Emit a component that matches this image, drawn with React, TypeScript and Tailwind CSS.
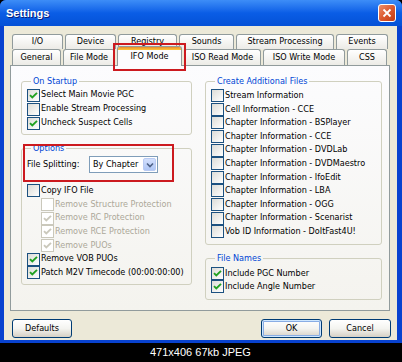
import React from 'react';

const ROW1 = [
  { label: 'I/O', w: 'w-[51px]' },
  { label: 'Device', w: 'w-[51px]' },
  { label: 'Registry', w: 'w-[59px]' },
  { label: 'Sounds', w: 'w-[55px]' },
  { label: 'Stream Processing', w: 'w-[98px]' },
  { label: 'Events', w: 'w-[52px]' },
];

const ROW2 = [
  { label: 'General', w: 'w-[49px]' },
  { label: 'File Mode', w: 'w-[52px]' },
  { label: 'IFO Mode', w: 'w-[65px]', active: true },
  { label: 'ISO Read Mode', w: 'w-[77px]' },
  { label: 'ISO Write Mode', w: 'w-[82px]' },
  { label: 'CSS', w: 'w-[40px]' },
];

const STARTUP = [
  { label: 'Select Main Movie PGC', checked: true },
  { label: 'Enable Stream Processing', checked: false },
  { label: 'Uncheck Suspect Cells', checked: true },
];

const OPTIONS = [
  { label: 'Copy IFO File', checked: false },
  { label: 'Remove Structure Protection', checked: false, sub: true },
  { label: 'Remove RC Protection', checked: true, sub: true },
  { label: 'Remove RCE Protection', checked: true, sub: true },
  { label: 'Remove PUOs', checked: true, sub: true },
  { label: 'Remove VOB PUOs', checked: true },
  { label: 'Patch M2V Timecode (00:00:00:00)', checked: true },
];

const EXTRA = [
  'Stream Information',
  'Cell Information - CCE',
  'Chapter Information - BSPlayer',
  'Chapter Information - CCE',
  'Chapter Information - DVDLab',
  'Chapter Information - DVDMaestro',
  'Chapter Information - IfoEdit',
  'Chapter Information - LBA',
  'Chapter Information - OGG',
  'Chapter Information - Scenarist',
  'Vob ID Information - DoItFast4U!',
];

function Check({ checked, disabled }: { checked: boolean; disabled?: boolean }) {
  return (
    <span
      className={`w-[13px] h-[13px] shrink-0 flex items-center justify-center border ${
        disabled
          ? 'border-[#CAC8BB] bg-white'
          : 'border-[#1C5180] bg-gradient-to-br from-[#DCDCD7] to-white'
      }`}
    >
      {checked && (
        <svg width="11" height="11" viewBox="0 0 11 11">
          <path
            d="M2 5.2 L4.3 7.5 L9 2.8"
            fill="none"
            stroke={disabled ? '#CAC8BB' : '#21A121'}
            strokeWidth="1.9"
          />
        </svg>
      )}
    </span>
  );
}

function Row({
  label,
  checked,
  disabled,
  h,
}: {
  label: string;
  checked: boolean;
  disabled?: boolean;
  h: string;
}) {
  return (
    <div className={`flex items-center gap-[1px] ${h}`}>
      <Check checked={checked} disabled={disabled} />
      <span className={`whitespace-nowrap ${disabled ? 'text-[#ACA899]' : 'text-black'}`}>{label}</span>
    </div>
  );
}

function Group({ title, className, children }: { title: string; className?: string; children: React.ReactNode }) {
  return (
    <fieldset className={`border border-[#D0D0BF] rounded-[3px] pl-[5px] pr-[2px] ${className ?? ''}`}>
      <legend className="ml-[4px] px-[2px] leading-[13px] text-[#0046D5]">{title}</legend>
      {children}
    </fieldset>
  );
}

function Tab({ label, w, active, h }: { label: string; w: string; active?: boolean; h: string }) {
  if (active) {
    return (
      <div
        className={`${w} h-[20px] -mb-[1px] relative z-10 flex flex-col rounded-t-[3px] border border-b-0 border-[#919B9C] bg-[#FCFCFE] overflow-hidden`}
      >
        <div className="h-[3px] bg-gradient-to-b from-[#E68B2C] to-[#FFC73C]" />
        <div className="flex-1 flex items-center justify-center pb-[2px]">{label}</div>
      </div>
    );
  }
  return (
    <div
      className={`${w} ${h} flex items-center justify-center rounded-t-[3px] border border-b-0 border-[#919B9C] bg-gradient-to-b from-white to-[#ECEBE6]`}
    >
      {label}
    </div>
  );
}

function Button({ label, w, def }: { label: string; w: string; def?: boolean }) {
  return (
    <div
      className={`${w} h-[19px] flex items-center justify-center rounded-[3px] border border-[#003C74] bg-gradient-to-b from-white via-[#F4F4F0] to-[#D6D0C5] ${
        def ? 'shadow-[inset_0_0_0_1px_#CEE7FF,inset_0_0_0_2px_#89ADE4]' : ''
      }`}
    >
      {label}
    </div>
  );
}

export default function App() {
  return (
    <div className="relative w-[402px] h-[362px] bg-black overflow-hidden font-['DejaVu_Sans_Condensed','DejaVu_Sans',sans-serif] text-[9px] text-black">
      <div className="h-[343px] flex flex-col bg-[#0842CF] rounded-t-[6px]">
        {/* title bar */}
        <div className="h-[26px] flex items-center justify-between pl-[6px] pr-[6px] rounded-t-[6px] bg-gradient-to-b from-[#3D8DF7] via-[#0A5DE6] to-[#0551D6]">
          <span className="font-['Liberation_Sans',sans-serif] font-bold text-[11px] text-white [text-shadow:1px_1px_0_#0A1E7A]">
            Settings
          </span>
          <div className="w-[18px] h-[18px] flex items-center justify-center rounded-[3px] border border-white bg-gradient-to-br from-[#EC8E6A] via-[#DC5A30] to-[#C23A12]">
            <svg width="10" height="10" viewBox="0 0 10 10">
              <path d="M1.5 1.5 L8.5 8.5 M8.5 1.5 L1.5 8.5" stroke="white" strokeWidth="1.8" />
            </svg>
          </div>
        </div>

        <div className="flex-1 ml-[4px] mr-[5px] mb-[3px] bg-[#ECE9D8] flex flex-col">
          {/* tabs */}
          <div className="pt-[8px] pl-[8px] flex flex-col">
            <div className="flex gap-[2px] h-[15px]">
              {ROW1.map((t) => (
                <Tab key={t.label} label={t.label} w={t.w} h="h-[15px]" />
              ))}
            </div>
            <div className="flex items-end gap-[2px] h-[16px]">
              {ROW2.map((t) => (
                <Tab key={t.label} label={t.label} w={t.w} active={t.active} h="h-[16px]" />
              ))}
            </div>
          </div>

          {/* tab page */}
          <div className="ml-[6px] w-[380px] h-[246px] border border-[#919B9C] bg-gradient-to-b from-[#FCFCFE] to-[#F4F3EE] pl-[10px] pt-[9px]">
            <div className="grid grid-cols-[171px_177px] gap-x-[13px] items-start">
              <div className="flex flex-col">
                <Group title="On Startup" className="pb-[4px]">
                  {STARTUP.map((r) => (
                    <Row key={r.label} label={r.label} checked={r.checked} h="h-[14px]" />
                  ))}
                </Group>
                <Group title="Options" className="mt-[7px] pb-[4px]">
                  <div className="mt-[1px] h-[17px] flex items-center">
                    <span className="w-[62px] pl-[0px]">File Splitting:</span>
                    <div className="w-[69px] h-[17px] flex items-center border border-[#7F9DB9] bg-white">
                      <span className="flex-1 pl-[3px]">By Chapter</span>
                      <div className="w-[13px] h-[13px] mr-[1px] flex items-center justify-center rounded-[2px] border border-[#B9CBF3] bg-gradient-to-b from-[#D3E0FD] to-[#AFC6F5]">
                        <svg width="8" height="6" viewBox="0 0 8 6">
                          <path d="M1 1.5 L4 4.5 L7 1.5" fill="none" stroke="#4D6185" strokeWidth="1.6" />
                        </svg>
                      </div>
                    </div>
                  </div>
                  <div className="mt-[11px]">
                    {OPTIONS.map((r) => (
                      <div key={r.label} className={r.sub ? 'pl-[14px]' : ''}>
                        <Row label={r.label} checked={r.checked} disabled={r.sub} h="h-[13.67px]" />
                      </div>
                    ))}
                  </div>
                </Group>
              </div>

              <div className="flex flex-col">
                <Group title="Create Additional Files" className="pb-[5px]">
                  <div className="mt-[1px]">
                    {EXTRA.map((l) => (
                      <Row key={l} label={l} checked={false} h="h-[13.6px]" />
                    ))}
                  </div>
                </Group>
                <Group title="File Names" className="mt-[7px] pb-[5px]">
                  <div className="mt-[2px]">
                    <Row label="Include PGC Number" checked h="h-[13.5px]" />
                    <Row label="Include Angle Number" checked h="h-[13.5px]" />
                  </div>
                </Group>
              </div>
            </div>
          </div>

          {/* buttons */}
          <div className="mt-[8px] pl-[8px] pr-[6px] flex justify-between">
            <Button label="Defaults" w="w-[60px]" />
            <div className="flex gap-[7px]">
              <Button label="OK" w="w-[61px]" def />
              <Button label="Cancel" w="w-[62px]" />
            </div>
          </div>
        </div>
      </div>

      <div className="h-[19px] flex items-center pl-[150px] font-['Liberation_Sans',sans-serif] text-[11px] text-white">
        471x406 67kb JPEG
      </div>

      {/* red annotation boxes */}
      <div className="absolute left-[113px] top-[43px] w-[73px] h-[28px] border-2 border-[#CC1A1F] z-20" />
      <div className="absolute left-[23px] top-[144px] w-[151px] h-[38px] border-2 border-[#CC1A1F] z-20" />
    </div>
  );
}
